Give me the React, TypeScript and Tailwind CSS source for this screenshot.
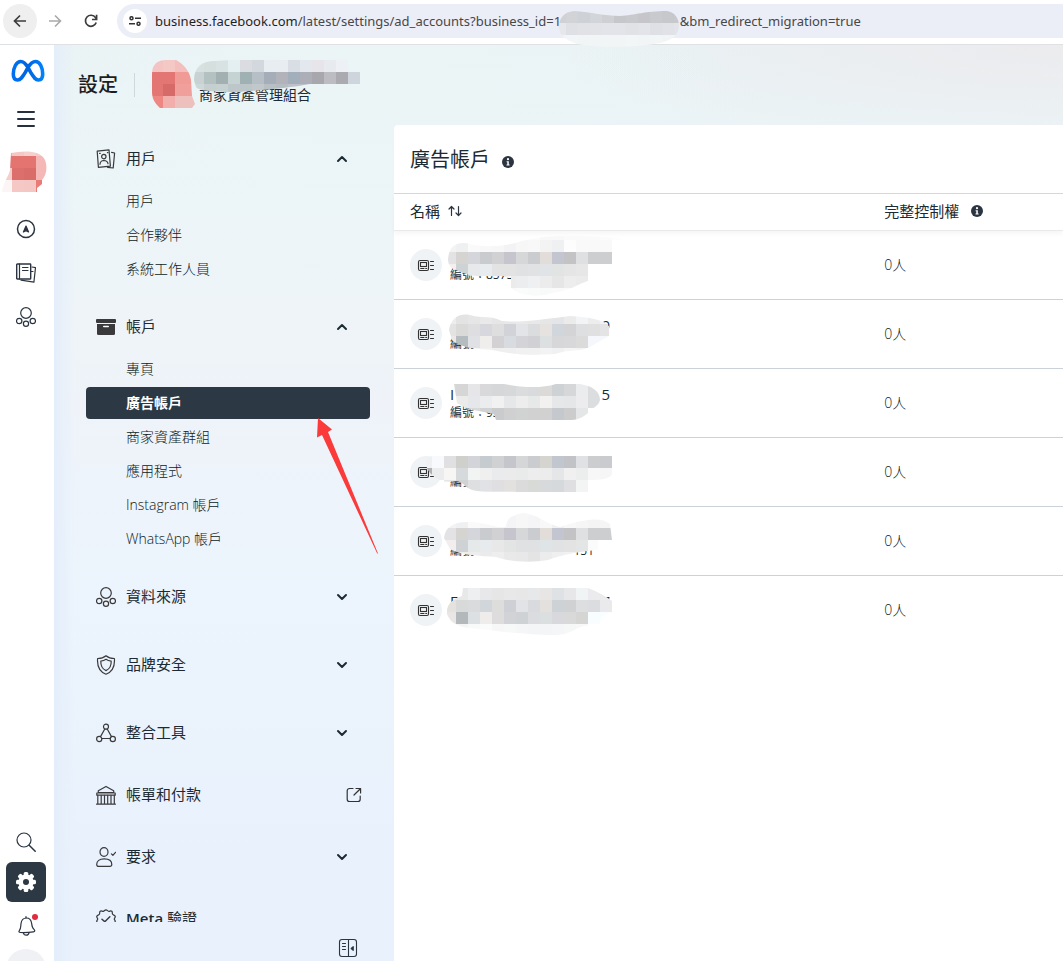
import React from "react";
import type { ReactNode } from "react";

type MosaicRow = [x: number, y: number, colors: string];

type MosaicProps = {
  id: string;
  box: [number, number, number, number];
  path: string;
  rows: MosaicRow[];
  className: string;
};

const CELL = 12;

/** Pixelated patch that hides private names and numbers. */
function Mosaic({ id, box, path, rows, className }: MosaicProps) {
  return (
    <svg
      aria-hidden="true"
      width={box[2]}
      height={box[3]}
      viewBox={box.join(" ")}
      className={className}
      shapeRendering="crispEdges"
    >
      <clipPath id={id}>
        <path d={path} />
      </clipPath>
      <g clipPath={`url(#${id})`}>
        {rows.map(([x, y, colors]) =>
          colors
            .split(" ")
            .map((c, i) => (
              <rect key={`${x}-${y}-${i}`} x={x + i * CELL} y={y} width={CELL} height={CELL} fill={`#${c}`} />
            )),
        )}
      </g>
    </svg>
  );
}

type IconProps = { children: ReactNode; className?: string; size?: number };

function Icon({ children, className = "", size = 20 }: IconProps) {
  return (
    <svg
      aria-hidden="true"
      width={size}
      height={size}
      viewBox="0 0 20 20"
      fill="none"
      stroke="currentColor"
      strokeWidth="1.2"
      strokeLinecap="round"
      strokeLinejoin="round"
      className={`shrink-0 ${className}`}
    >
      {children}
    </svg>
  );
}

const ContactsIcon = () => (
  <Icon>
    <path d="M1.2 2.2 13 .9l1.4 16.2-12 1.2z" />
    <circle cx="7.8" cy="7.6" r="2.2" />
    <path d="M4 15.2c.2-2.6 1.6-3.6 3.8-3.7 2.3 0 3.8.9 4.2 3.2" />
    <path d="M15.6 3.4 18.6 4l-1.4 15-5.6-.6" />
    <path d="M3.6 4.4h.6M11.4 3.6h.6" />
  </Icon>
);

const ArchiveIcon = () => (
  <svg aria-hidden="true" width="20" height="20" viewBox="0 0 20 20" className="shrink-0">
    <rect x="0" y="2" width="20" height="4" rx="1" fill="#3a3a3c" />
    <path d="M1 7h18v9.500a1.500 1.500 0 0 1-1.500 1.500h-15A1.500 1.500 0 0 1 1 16.500z" fill="#3a3a3c" />
    <rect x="7" y="8.700" width="6" height="1.500" rx=".7" fill="#fff" />
  </svg>
);

const SourcesIcon = () => (
  <Icon>
    <circle cx="10" cy="6" r="5.300" />
    <circle cx="3.200" cy="14" r="2.700" />
    <circle cx="16.800" cy="14" r="2.700" />
    <circle cx="10" cy="16.800" r="2.600" />
  </Icon>
);

const ShieldIcon = () => (
  <Icon>
    <path d="M10 .8c2.400 2 5.200 2.700 8.400 2.700.6 7.400-1.400 12.900-8.400 15.700C3 16.400 1 10.900 1.600 3.500c3.200 0 6-.7 8.400-2.700z" />
    <path d="M10 4.300c1.500 1.200 3.200 1.700 5.200 1.800.2 4.600-1.200 7.700-5.200 9.500-4-1.800-5.400-4.900-5.200-9.500 2-.1 3.700-.6 5.200-1.800z" />
  </Icon>
);

const NodesIcon = () => (
  <Icon>
    <circle cx="10" cy="3.700" r="2.500" />
    <circle cx="3.200" cy="16" r="2.600" />
    <circle cx="16.800" cy="16" r="2.600" />
    <path d="M8.800 6 4.500 13.600M11.200 6l4.300 7.600M5.900 15.500h8.200" />
  </Icon>
);

const BankIcon = () => (
  <Icon>
    <path d="M2.300 5.800 10 1.400l7.700 4.400v1.800H2.300zM.8 8h18.400v2.200H.8z" />
    <path d="M1.800 10.400v8.200M5.200 10.400v8.200M8.500 10.400v8.200M11.700 10.400v8.200M15 10.400v8.200M18.300 10.400v8.200M.6 19.200h18.800" />
  </Icon>
);

const PersonCheckIcon = () => (
  <Icon>
    <ellipse cx="8" cy="5" rx="4" ry="4.400" />
    <path d="M.7 17.600c0-3.700 2.600-5.700 7.600-5.700s7.500 2 7.500 5.700c0 1.400-.7 1.800-2 1.800H2.700c-1.300 0-2-.4-2-1.800zM15.400 6.800l1.500 1.500 2.600-3" />
  </Icon>
);

const VerifiedIcon = () => (
  <Icon>
    <path d="M10 .8c1.300 0 1.700 1.400 2.800 1.500 1.200.1 2-.9 3 0s.2 2 .8 3 2.200.8 2.600 2-.9 1.700-.9 2.700 1.300 1.500.9 2.700-2 1-2.600 2 .2 2.100-.8 3-1.800-.1-3 0-1.500 1.500-2.800 1.500-1.700-1.400-2.800-1.500c-1.200-.1-2 .9-3 0s-.2-2-.8-3-2.200-.8-2.600-2 .9-1.700.9-2.700-1.300-1.500-.9-2.700 2-1 2.600-2-.2-2.100.8-3 1.800.1 3 0S8.700.8 10 .8z" />
    <path d="m6 10.300 2.800 2.400 5-5" strokeWidth="1.500" />
  </Icon>
);

const AdAccountIcon = () => (
  <svg
    aria-hidden="true"
    width="18"
    height="14"
    viewBox="0 0 18 14"
    fill="none"
    stroke="#333"
    strokeWidth="1.100"
    strokeLinecap="round"
  >
    <rect x="1.500" y="2.500" width="10" height="10" rx="1.500" />
    <rect x="3.500" y="4.500" width="6" height="4" />
    <path d="M3.700 10.500H7M8.700 10.500h1M13.500 3.500h3M13.500 7.500h3M13.500 11.500h3" />
  </svg>
);

const InfoIcon = () => (
  <svg aria-hidden="true" width="12" height="12" viewBox="0 0 12 12">
    <circle cx="6" cy="6" r="6" fill="#2b3541" />
    <circle cx="6" cy="3.200" r="1.100" fill="#fff" />
    <path d="M4.600 5.300h2.200v3.300h.8v1H4.500v-1h.8V6.300h-.7z" fill="#fff" />
  </svg>
);

function Chevron({ up = false }: { up?: boolean }) {
  return (
    <svg
      aria-hidden="true"
      width="12"
      height="12"
      viewBox="0 0 12 12"
      fill="none"
      stroke="#1c2b33"
      strokeWidth="2"
      strokeLinecap="round"
      strokeLinejoin="round"
    >
      <path d={up ? "M2 8l4-4 4 4" : "M2 4l4 4 4-4"} />
    </svg>
  );
}

const ExternalIcon = () => (
  <svg
    aria-hidden="true"
    width="16"
    height="16"
    viewBox="0 0 16 16"
    fill="none"
    stroke="#333"
    strokeWidth="1.200"
    strokeLinecap="round"
    strokeLinejoin="round"
  >
    <path d="M7 1.500H3.500a2.300 2.300 0 0 0-2.300 2.300v8.400a2.300 2.300 0 0 0 2.300 2.300h8.400a2.300 2.300 0 0 0 2.300-2.300V9M10 1.500h4.600V6M14.400 1.700 8 8" />
  </svg>
);

function BrowserBar() {
  return (
    <div className="flex h-[45px] shrink-0 items-center border-b border-[#e0e1e3] bg-white pb-0.5 pl-[3px] text-[#474747]">
      <button aria-label="上一頁" className="grid size-[34px] place-items-center rounded-full bg-[#efefef]">
        <svg width="14" height="14" viewBox="0 0 14 14" fill="none" stroke="#3c3c3c" strokeWidth="1.700">
          <path d="M13 7H2M7 1.500 1.500 7 7 12.500" />
        </svg>
      </button>
      <button aria-label="下一頁" className="grid size-9 place-items-center">
        <svg width="14" height="14" viewBox="0 0 14 14" fill="none" stroke="#a9a9a9" strokeWidth="1.600">
          <path d="M1 7h11M7 1.500 12.500 7 7 12.500" />
        </svg>
      </button>
      <button aria-label="重新載入" className="grid size-9 place-items-center">
        <svg width="14" height="14" viewBox="0 0 14 14" fill="none" stroke="#3c3c3c" strokeWidth="1.700">
          <path d="M12.200 8.500A5.500 5.500 0 1 1 11.500 3.600L12.400 5" />
          <path d="M12.600.8v4.700H8" />
        </svg>
      </button>
      <div className="ml-2 flex h-[34px] min-w-0 flex-1 items-center gap-2 rounded-l-full bg-[#eceef7] pl-1.5">
        <button aria-label="網站資訊" className="grid size-6 shrink-0 place-items-center rounded-full bg-white">
          <svg width="12" height="10" viewBox="0 0 12 10" fill="none" stroke="#333" strokeWidth="1.500">
            <circle cx="2.500" cy="2.200" r="1.500" />
            <path d="M6 2.200h6M0 7.800h6" />
            <circle cx="9.500" cy="7.800" r="1.500" />
          </svg>
        </button>
        <div className="flex font-['Noto_Sans',sans-serif] text-[13px] leading-5 whitespace-nowrap">
          <span>
            <span className="text-[#1f1f1f]">business.facebook.com</span>
            /latest/settings/ad_accounts?business_id=
          </span>
          <span className="relative w-[126px]">
            1
            <Mosaic
              id="m-url"
              className="absolute -top-0.5 left-1"
              box={[556, 10, 126, 40]}
              path="M557 28C557 20 561 13 572 12 590 13 602 17 618 17 634 16 642 12 665 12 673 13 677 20 677 27 677 35 671 41 658 44 630 49 598 49 575 45 561 40 557 35 557 28Z"
              rows={[
                [552, 12, "d0d1d4 d2d3d6 ced2d6 d2d5d9 ced0d4 c6c7cb c8c9cd c6c6ca c9cacd c7c8cb c8c9cd"],
                [552, 24, "e5e7ec dfe0e5 e0e2e6 e2e3e7 e3e4e9 e3e4e9 e0e2e6 e3e4ea dee0e5 e0e2e7 e3e4ea"],
                [552, 36, "f0f4f5 f2f6f6 f1f5f5 f1f5f6 f2f5f6 f1f5f6 f2f6f6 f1f5f5 f3f6f7 f1f5f6 f2f6f7"],
              ]}
            />
          </span>
          <span>&amp;bm_redirect_migration=true</span>
        </div>
      </div>
    </div>
  );
}

const railButton = "grid size-10 place-items-center";

function Rail() {
  return (
    <aside className="flex w-[54px] shrink-0 flex-col items-center bg-white pr-0.5 text-[#2b3541]">
      <a href="#home" aria-label="Meta" className="mt-3 ml-1 grid h-7 w-9 place-items-center">
        <svg width="34" height="24" viewBox="0 0 34 24" fill="none" strokeWidth="3.600">
          <defs>
            <linearGradient id="meta" x1="0" x2="1">
              <stop offset="0" stopColor="#0072f0" />
              <stop offset="0.500" stopColor="#0064e0" />
              <stop offset="1" stopColor="#0082fb" />
            </linearGradient>
          </defs>
          <path
            d="M17 8.500C14.600 4.500 12.500 2.500 9.800 2.500 5.200 2.500 2.300 9 2.300 15c0 3.800 1.700 6 4.300 6 3 0 4.700-2.700 7.700-7.600L17 8.500c2.500-4.200 4.900-6 7.500-6 4.600 0 7.200 6.500 7.200 12.500 0 3.800-1.500 6-4.200 6-3 0-4.600-2.400-7.800-7.600z"
            stroke="url(#meta)"
          />
        </svg>
      </a>
      <button aria-label="選單" className={`mt-3.5 ${railButton}`}>
        <Icon className="text-[#26313d]">
          <path d="M2 3h16M2 10h16M2 17h16" strokeWidth="2" />
        </Icon>
      </button>
      <button aria-label="商家" className="relative mt-2 h-12 w-full">
        <Mosaic
          id="m-rail"
          className="absolute top-0 left-0"
          box={[0, 147, 54, 48]}
          path="M11 153C22 151 40 149 45 160 48 168 46 176 42 180L42 184 37 188 37 192 2 192C4 180 9 176 10 170Z"
          rows={[
            [0, 144, "f2aaa6 f4c8c5 f6d0cd f4c9c6"],
            [0, 156, "e57571 e47470 e47470 f4b9b6"],
            [0, 168, "f7cdca dc6e6b d96b68 f4b9b6"],
            [0, 180, "fbf5f5 f5c7c5 f4c6c4 e87b77"],
          ]}
        />
      </button>
      <nav aria-label="主要工具" className="mt-3.5 flex flex-col gap-1">
        <button aria-label="廣告中心" className={railButton}>
          <Icon>
            <circle cx="10" cy="10" r="8.500" strokeWidth="1.500" />
            <path d="m10 7 2.600 6-2.600-1.300L7.400 13z" fill="currentColor" />
          </Icon>
        </button>
        <button aria-label="內容" className={railButton}>
          <Icon>
            <rect x=".7" y="1" width="14" height="15" rx=".6" strokeWidth="1.400" />
            <path d="M3.500 1v15M6.500 4.500h5.500M6.500 7.500h5.500M16 4l3.500.6-1.600 14.600L5 17.200M15 8.500h2" />
          </Icon>
        </button>
        <button aria-label="資料來源" className={railButton}>
          <SourcesIcon />
        </button>
      </nav>
      <div className="mt-auto flex flex-col">
        <button aria-label="搜尋" className={railButton}>
          <Icon>
            <circle cx="8" cy="8" r="7" />
            <path d="m13.200 13.200 6 6" strokeWidth="1.500" />
          </Icon>
        </button>
        <button aria-label="設定" className={`rounded-md bg-[#2c3843] text-white ${railButton}`}>
          <svg width="22" height="22" viewBox="0 0 22 22">
            <g fill="#fff">
              <circle cx="11" cy="11" r="7.600" />
              {[0, 45, 90, 135].map((a) => (
                <rect key={a} x="8.700" y="1" width="4.600" height="20" rx="1.500" transform={`rotate(${a} 11 11)`} />
              ))}
            </g>
            <circle cx="11" cy="11" r="3" fill="#2c3843" />
          </svg>
        </button>
        <button aria-label="通知" className={`relative mt-1 ${railButton}`}>
          <Icon>
            <path d="M3.200 14.800C5.200 12.500 4.600 10.500 5 7.600 5.500 4 7.500 2 10.400 2c3 0 4.800 2 5.200 5.300.3 3 .4 4.600 2.600 6.300 1 .9.600 2-.8 2.200-4.300.7-8.600.9-13 .7-1.300-.1-1.900-.9-1.200-1.700z" />
            <path d="M7.400 16.700c.2 1.700 1.300 2.500 2.900 2.500 1.500 0 2.500-.9 2.800-2.600M10 2V.6" />
          </Icon>
          <span className="absolute top-2 right-2 size-1.5 rounded-full bg-[#e02c3c]" />
        </button>
        <div className="mt-[3px] h-3 overflow-hidden">
          <div className="size-10 rounded-full bg-[#f0f1f4]" />
        </div>
      </div>
    </aside>
  );
}

type Section = {
  label: ReactNode;
  key: string;
  icon: ReactNode;
  items?: string[];
  external?: boolean;
  plain?: boolean;
  gap: string;
};

const sections: Section[] = [
  {
    key: "people",
    label: "用戶",
    icon: <ContactsIcon />,
    items: ["用戶", "合作夥伴", "系統工作人員"],
    gap: "mb-[18px]",
  },
  {
    key: "accounts",
    label: "帳戶",
    icon: <ArchiveIcon />,
    items: ["專頁", "廣告帳戶", "商家資產群組", "應用程式", "Instagram 帳戶", "WhatsApp 帳戶"],
    gap: "mb-[18px]",
  },
  { key: "sources", label: "資料來源", icon: <SourcesIcon />, gap: "mb-5" },
  { key: "safety", label: "品牌安全", icon: <ShieldIcon />, gap: "mb-5" },
  { key: "integrations", label: "整合工具", icon: <NodesIcon />, gap: "mb-3.5" },
  { key: "billing", label: "帳單和付款", icon: <BankIcon />, external: true, gap: "mb-3.5" },
  { key: "requests", label: "要求", icon: <PersonCheckIcon />, gap: "mb-3.5" },
  {
    key: "verified",
    label: (
      <>
        <span className="font-semibold">Meta</span> 驗證
      </>
    ),
    icon: <VerifiedIcon />,
    plain: true,
    gap: "",
  },
];

const ACTIVE = "廣告帳戶";

function Pointer() {
  return (
    <svg
      aria-hidden="true"
      width="64"
      height="138"
      viewBox="0 0 64 138"
      className="pointer-events-none absolute top-[30px] left-[230px] z-10"
    >
      <path d="M2 1 16 12.500 12 15 62 136.500h-.8L6 18 1 20.500z" fill="#fb3b3b" />
    </svg>
  );
}

function Sidebar() {
  return (
    <div className="flex min-h-0 w-[340px] shrink-0 flex-col">
      <nav aria-label="設定" className="min-h-0 flex-1 overflow-hidden pt-2.5 pr-6 pl-8">
        {sections.map((s) => (
          <section key={s.key} className={s.gap}>
            <button
              className={`flex h-12 w-full items-center gap-2.5 pl-2.5 text-[15px] text-[#1c2b33] ${s.external ? "pr-2" : "pr-[22px]"}`}
              aria-expanded={s.plain || s.external ? undefined : Boolean(s.items)}
            >
              <span className="text-[#3a3a3c]">{s.icon}</span>
              <span className="flex-1 pb-0.5 text-left">{s.label}</span>
              {s.external ? <ExternalIcon /> : s.plain ? null : <Chevron up={Boolean(s.items)} />}
            </button>
            {s.items && (
              <ul className="flex flex-col gap-0.5 pt-0.5">
                {s.items.map((item) => (
                  <li key={item} className="relative">
                    <a
                      href={`#${item}`}
                      aria-current={item === ACTIVE ? "page" : undefined}
                      className={`flex h-8 items-center rounded pb-0.5 pl-10 text-[14px] ${
                        item === ACTIVE ? "bg-[#2c3843] font-bold text-white" : "font-light text-[#0c1b23]"
                      }`}
                    >
                      {item}
                    </a>
                    {item === ACTIVE && <Pointer />}
                  </li>
                ))}
              </ul>
            )}
          </section>
        ))}
      </nav>
      <div className="flex h-[39px] shrink-0 items-center justify-end pt-3 pr-9">
        <button aria-label="收合側邊欄" className="text-[#2b3541]">
          <Icon>
            <rect x="1.500" y="1.500" width="17" height="17" rx="2.500" strokeWidth="1.100" />
            <path d="M10.500 1.500v17M4.500 5.500h3M4.500 8.500h3M4.500 11.500h3" strokeWidth="1.100" />
            <path d="m13.200 10.500 2-1.800v3.600z" fill="currentColor" />
          </Icon>
        </button>
      </div>
    </div>
  );
}

function PageHeader() {
  return (
    <header className="flex h-20 shrink-0 items-center pl-6">
      <h1 className="text-[20px] leading-8 font-medium text-[#1c1e21]">設定</h1>
      <span className="mx-4 h-6 w-px bg-[#cfd8dc]" />
      <div className="relative h-[60px] w-60">
        <p className="absolute top-[30px] left-12 text-[14px] leading-5 text-[#1c2b33]">商家資產管理組合</p>
        <Mosaic
          id="m-logo"
          className="absolute top-0 left-0"
          box={[151, 55, 240, 60]}
          path="M152 74C152 64 158 60 166 60L176 60C184 64 190 72 191 80L192 96 195 104 192 108 160 108C156 104 152 100 152 92Z"
          rows={[
            [151, 60, "f3c4c2 f4c8c5 f3bebb f3bebb"],
            [151, 72, "e37672 e37672 f19b97 f19b97"],
            [151, 84, "e37672 d56a68 f19f9b f19f9b"],
            [151, 96, "ee8682 f2aeab edbfbd edbfbd"],
          ]}
        />
        <Mosaic
          id="m-name"
          className="absolute top-0 left-0"
          box={[151, 55, 240, 60]}
          path="M194 80C194 68 201 61 215 61L232 60 268 60 348 60 348 72 360 72 360 84 310 84C290 88 260 90 240 92 222 92 200 92 196 87Z"
          rows={[
            [192, 60, "d7e1e0 d5dfde d9e2e2 e3eff0 dbdce2 d3d8de e7edf1 e7edf1 d8dee3 e2e8ed e8e5ea e7ebf0 edf0f4"],
            [192, 72, "c9d2d2 b4c1c1 a2b0b2 c5d3d3 9fb1b2 b6bfc5 a4adb8 b2b3ba a2aeb9 acafb8 a8a7ae bdbcc2 abaab1 cfd5dc"],
            [192, 84, "ced8d9 c5cfd0 c5d0d1 bdc7c9 bcc6c8 c1c8cc b8bfc5 b5bcc2 bcc2c8 b9bec4"],
          ]}
        />
      </div>
    </header>
  );
}

type Account = {
  head: string;
  tail: string;
  code: string;
  codeEnd: string;
  y: number;
  path: string;
  rows: MosaicRow[];
};

const DARK = "d5d4d1 d5d5dc c9cbce d1d1d4 c6c5cd d5d7d9 cbccd0 e2ddd8 c3c6d0 c3c3c6 dee0e2 cdced0 cdced0";

const accounts: Account[] = [
  {
    head: "",
    tail: "",
    code: "編號：8575",
    codeEnd: "",
    y: 231,
    path: "M448 259C449 248 454 242 466 243 482 248 505 247 522 241 545 235 580 234 625 239L612 241 612 264 588 264 588 281C578 284 570 291 552 293 538 298 520 296 511 288L511 276C490 279 470 277 456 270 450 268 448 264 448 259Z",
    rows: [
      [444, 228, "fdfdfd fdfdfd fcfcfc fcfcfc fcfcfc fcfcfc fbfbfb fbfbfb f8f8f8 f8f8f8 fafafa fafafa fafafa fbfbfb fdfdfd"],
      [444, 240, "f3f3f4 eff0f1 fafafa f8f8f8 f7f7f8 f3f3f5 f7f7f8 f8f8f8 f3f3f3 eff0f2 fdfdfd f9f9f9 f9f9f9 f9f9f9"],
      [444, 252, "e3e3e5 " + DARK],
      [444, 264, "f5f0ef cdd2d5 e7e9eb e8ecee e3e3e4 e3e3e4 dfe1e3 e0e2e4 e0e4e6 e2e3e3 e4e5e4 e7e7e7"],
      [504, 276, "ebebec ecedee eff0f1 ececec e6e6e6 ededed ebebeb"],
      [504, 288, "fafafa fafbfb f9fafa f8f9f9 fafafa fafafa"],
    ],
  },
  {
    head: "",
    tail: "9",
    code: "編號",
    codeEnd: "",
    y: 300,
    path: "M449 330C451 319 458 313 470 315 484 319 490 315 502 321 520 323 545 319 570 316 590 317 604 320 609 326L609 336 588 348C575 352 570 349 555 354 530 356 510 354 492 350 478 349 460 348 452 340Z",
    rows: [
      [444, 312, "ededee e3e3e4 e6e6e6 e9e9ea e6e6e7 e7e7e8 e9e9ea e8e8ea e6e6e6 e4e5e8 ebebec f2f4f6 ededee f3f3f3"],
      [444, 324, "e3e3e3 dadad9 dedee1 d7d8dd dededf d2d3d9 e3e4e7 dbdcde e5e2df d1d6dc d4d4d6 dedfe0 e0e0e1 e4e4e5"],
      [444, 336, "ebe8e7 b5bcc0 dfe1e4 efeeec d3d1d4 d8dbe0 d4d4d8 d0d0d5 dde0e0 d7d7d9 d8d8da dadbda f5f7fc f5f7fc"],
      [444, 348, "f2f2f3 f2f2f3 f2f2f3 f2f2f3 efefef efeff0 f1f1f2 f1f1f2 f3f3f4 f0f1f2 f5f5f6 f3f3f4"],
    ],
  },
  {
    head: "I",
    tail: "5",
    code: "編號：93",
    codeEnd: "",
    y: 369,
    path: "M454 384 504 384C520 387 540 389 556 384L580 384C592 386 600 391 600 400 598 408 590 408 588 413 580 420 575 420 564 420L496 420 494 414C480 411 466 410 457 403Z",
    rows: [
      [444, 384, "d8d8d9 d6d6d7 e6e6e9 d9d9dc d6d7d8 d7d8d9 dbdcdd d8dadb dbdad8 ced2d5 d5d7d9 eaecee dbdddf dbdddf"],
      [444, 396, "eeeeec ebece9 e6e7ea ebecee f1f1f1 e6e7e8 ededee e7e8e8 f3f1ef e6e7e8 e5e6e7 ececee dbdddf dbdddf"],
      [444, 408, "dddddd dddddd d8dada d0d2d3 cacbcc d0d0d1 d1d2d2 d0d1d0 d0d1d0 c5c9ce cccccd e5e6e7"],
    ],
  },
  {
    head: "",
    tail: "",
    code: "編號",
    codeEnd: "",
    y: 438,
    path: "M426 462C427 457 430 456 434 456L612 456 612 474C610 480 596 480 588 480L588 492 517 492C500 491 485 493 472 490 464 487 464 482 456 481 440 484 436 478 431 474 427 470 426 466 426 462Z",
    rows: [
      [420, 456, "eef0f2 f8f9fc e0e0e2 cfcfcb d2d4d9 c5cbce cfd1d2 c5c5cc d4d6d8 cbccd0 d6d4cf c2c7cf c2c3c6 dfe1e4 cccdcf cacbce"],
      [420, 468, "aeb0b4 ebecee f8f6f4 d6dadd f2f4f4 eeefee eaebec ebebec e9ebea ededed ececec e4e6e7 f0f0f0 eceeee f7f7f7 f6f6f6"],
      [444, 480, "e5e7e7 d0d2d4 dddfe0 e1e2e6 dfdfe1 e2e1e0 dcdbdc d7dad6 d8d9da d5d9db dfdfe1 f3f5f5"],
    ],
  },
  {
    head: "",
    tail: "",
    code: "編號",
    codeEnd: "151",
    y: 507,
    path: "M444 538C445 527 454 522 466 522 482 521 494 528 506 527 506 518 514 514 524 513 540 515 543 523 560 527 578 521 600 515 610 524L612 540 588 540 598 540 598 550C574 552 562 555 548 560 530 563 510 562 496 557 480 556 460 555 450 549Z",
    rows: [
      [444, 504, "fbfbfb fbfbfb fbfbfb fafafa fafafa f8f8f9 f7f7f8 f7f7f8 fafafa fafafa fafafa fafafa"],
      [444, 516, "f3f3f4 eff0f2 fafafa f8f8f9 f6f6f8 f4f4f6 f7f7f7 f5f5f7 f8f8f8 f0f1f2 f8f8f9 f6f6f7 f4f4f5 f5f5f6"],
      [444, 528, "e3e3e5 " + DARK],
      [444, 540, "f3eeee ced2d5 e6e9e9 e8ebed e8e8e8 e3e4e4 dfe1e2 e0e1e3 dfe4e6 e0e2e3 e3e3e3 e4e5e5 fbfbfb"],
      [444, 552, "ededed ededed ededed ebebeb eeeeee e9e9e9 e8e8e8 e4e4e4 ececec efefef f1f1f1 f3f3f3"],
    ],
  },
  {
    head: "E",
    tail: "7",
    code: "",
    codeEnd: "",
    y: 576,
    path: "M463 588 588 588C598 592 606 596 612 601L612 612C608 614 600 614 600 624L584 626C575 628 572 634 556 635 530 635 500 632 482 629 465 628 452 627 447 614 446 603 454 599 462 596Z",
    rows: [
      [444, 588, "e6e6e8 e8e8e8 edeff1 e8e8ea e6e6e7 e8e8e9 e7e7e8 e7e8e9 e8e6e4 dfe2e5 e7e7ea f1f4f4 ebebed ebebed"],
      [444, 600, "e4e1df d8d9d9 dadbdd d1d6da dddddc cfcfd6 e1e3e6 d8dade e4e0dd cdd2d7 d0d1d2 dddedf dadcdf eaeaec"],
      [444, 612, "eae6e5 b3b8bb dce0e2 eeedeb dedcdc d1d3d7 cfd2d5 dadcdf dbdfe0 d9d8dc d9d9da d5d5d3 f8fdff f8fdff"],
      [444, 624, "f4f4f5 f5f5f6 f8f9f9 fafbfb f7f7f8 f7f8f8 f5f6f7 f4f5f7 f3f5f6 f5f6f7 f6f7f7 f8f8f8"],
    ],
  },
];

function AccountsPanel() {
  return (
    <main className="min-w-0 flex-1 rounded-tl bg-white text-[#1c2b33]">
      <div className="flex h-[68px] items-center gap-3 pt-0.5 pl-4">
        <h2 className="text-[20px] leading-8">廣告帳戶</h2>
        <button aria-label="關於廣告帳戶" className="mt-1">
          <InfoIcon />
        </button>
      </div>
      <table className="w-full table-fixed border-collapse">
        <thead>
          <tr className="h-[37px] border-y border-t-[#d3d8de] border-b-[#e9eaec] text-left text-[15px] shadow-[0_3px_4px_rgba(0,0,0,0.04)]">
            <th scope="col" className="w-[73%] p-0 pb-0.5 pl-4 font-normal">
              <button className="flex items-center gap-2">
                名稱
                <svg
                  aria-hidden="true"
                  width="14"
                  height="12"
                  viewBox="0 0 14 12"
                  fill="none"
                  stroke="#2b3541"
                  strokeWidth="1.200"
                  strokeLinecap="round"
                  strokeLinejoin="round"
                >
                  <path d="M3.500 10.500v-9M1 4l2.500-2.500L6 4M10.500 1.500v9M8 8l2.500 2.500L13 8" />
                </svg>
              </button>
            </th>
            <th scope="col" className="p-0 pb-0.5 pl-0.5 font-normal">
              <span className="flex items-center gap-3">
                完整控制權
                <InfoIcon />
              </span>
            </th>
          </tr>
        </thead>
        <tbody>
          {accounts.map((a, i) => (
            <tr key={a.y} className="h-[69px] border-b border-[#cbd2d9] last:border-0">
              <td className="p-0 pl-4">
                <div className="relative flex h-[68px] items-center gap-2">
                  <span className="grid size-8 shrink-0 place-items-center rounded-full bg-[#f0f3f6]">
                    <AdAccountIcon />
                  </span>
                  <div className="w-40">
                    <div className="flex h-5 justify-between text-[15px] leading-5">
                      <span>{a.head}</span>
                      <span>{a.tail}</span>
                    </div>
                    <div className="flex h-[18px] justify-between pr-4 text-[12px] leading-[18px]">
                      <span>{a.code}</span>
                      <span>{a.codeEnd}</span>
                    </div>
                  </div>
                  <Mosaic
                    id={`m-row-${i}`}
                    className="absolute top-0 left-2.5"
                    box={[420, a.y, 210, 68]}
                    path={a.path}
                    rows={a.rows}
                  />
                </div>
              </td>
              <td className="p-0 pb-0.5 pl-0.5 text-[14px] font-light text-[#0c1b23]">0人</td>
            </tr>
          ))}
        </tbody>
      </table>
    </main>
  );
}

export default function App() {
  return (
    <div className="flex h-screen flex-col overflow-hidden bg-white font-['Open_Sans','Noto_Sans_CJK_TC',sans-serif]">
      <BrowserBar />
      <div className="flex min-h-0 flex-1">
        <Rail />
        <div className="flex min-w-0 flex-1 flex-col bg-[linear-gradient(90deg,#e4eefa_0px,transparent_20px),radial-gradient(500px_100px_at_100%_0%,#ecebee,transparent),radial-gradient(420px_260px_at_30%_0%,#ebf5f6,transparent),linear-gradient(180deg,#e9f2f4_0px,#edf5f8_160px,#eff3f9_360px,#ecf4fc_520px,#e8f1fc_100%)]">
          <PageHeader />
          <div className="flex min-h-0 flex-1">
            <Sidebar />
            <AccountsPanel />
          </div>
        </div>
      </div>
    </div>
  );
}
